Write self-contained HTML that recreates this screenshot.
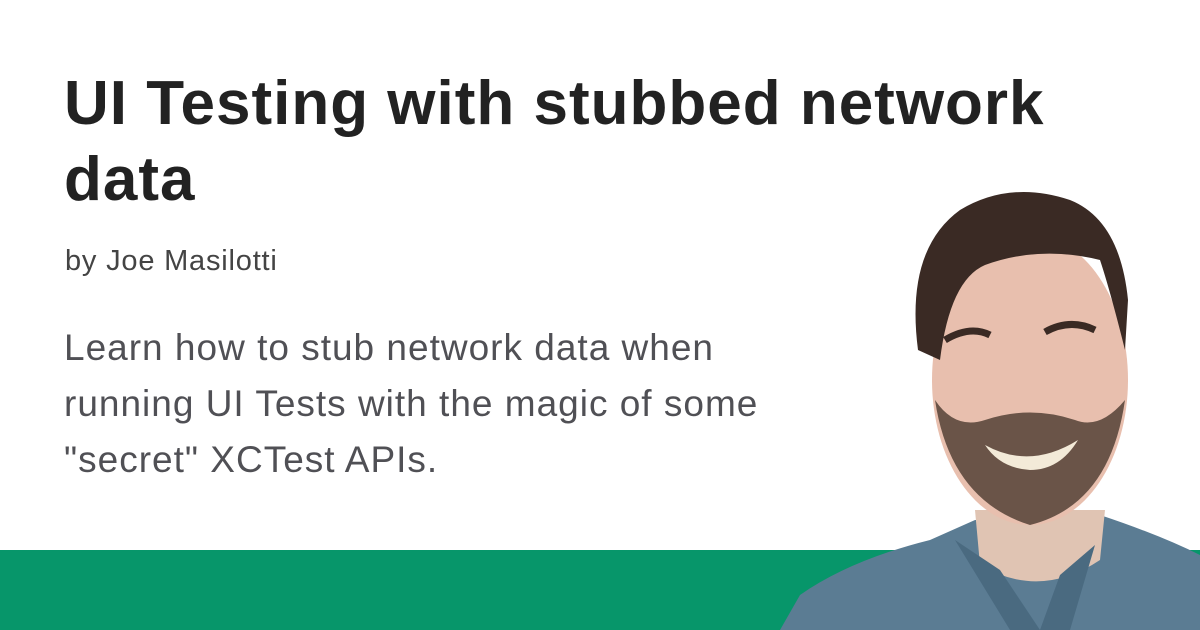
<!DOCTYPE html>
<html><head><style>
body{margin:0;width:1200px;height:630px;overflow:hidden;background:#fff;position:relative;font-family:"Liberation Sans",sans-serif}
.bar{position:absolute;left:0;top:550px;width:1200px;height:80px;background:#07966a}
h1{position:absolute;left:64px;top:66px;margin:0;font-size:62px;line-height:76px;font-weight:bold;color:#222;letter-spacing:1px;width:1060px}
.by{position:absolute;left:65px;top:245px;font-size:29px;color:#444;letter-spacing:0.8px}
.d{position:absolute;left:64px;top:320px;font-size:37px;line-height:56px;color:#505055;width:800px;letter-spacing:1px}
svg{position:absolute;left:0;top:0}
</style></head><body>
<div class="bar"></div>
<h1>UI Testing with stubbed network data</h1>
<div class="by">by Joe Masilotti</div>
<div class="d">Learn how to stub network data when<br>running UI Tests with the magic of some<br>"secret" XCTest APIs.</div>
<svg width="1200" height="630">
<path d="M780 630 L800 595 Q850 560 930 540 L975 520 L1100 515 Q1160 535 1200 555 L1200 630Z" fill="#5b7c93"/>
<path d="M975 510 L1105 510 L1100 560 Q1040 600 980 565Z" fill="#e0c4b3"/>
<path d="M955 540 L1000 570 L1040 630 L1010 630 Z M1095 545 L1060 575 L1040 630 L1070 630Z" fill="#4a6a80"/>
<ellipse cx="1030" cy="380" rx="98" ry="145" fill="#e8bfae"/>
<path d="M935 400 Q950 500 1030 525 Q1110 505 1125 400 Q1100 430 1075 420 Q1030 405 985 420 Q955 430 935 400Z" fill="#6a5448"/>
<path d="M985 445 Q1030 470 1078 440 Q1060 470 1030 470 Q1000 468 985 445Z" fill="#f3ead8"/>
<path d="M918 350 Q905 250 960 210 Q1010 180 1070 200 Q1120 220 1128 300 L1125 350 Q1110 290 1100 260 Q1040 245 985 265 Q950 280 940 360Z" fill="#3a2a24"/>
<path d="M945 340 Q970 325 990 335 M1045 332 Q1070 318 1095 330" stroke="#3a2a24" stroke-width="7" fill="none"/>
</svg>
</body></html>
